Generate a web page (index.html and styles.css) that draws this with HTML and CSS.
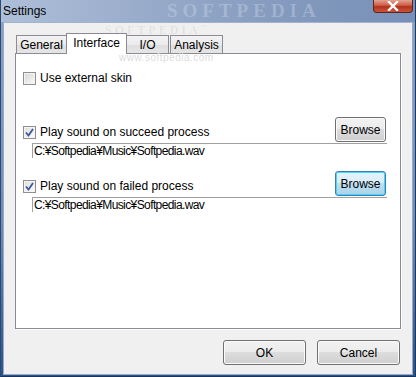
FILE: index.html
```html
<!DOCTYPE html>
<html lang="en">
<head>
    <meta charset="UTF-8">
    <title>Settings</title>
    <link rel="stylesheet" href="styles.css">
</head>
<body>
    <div class="window">
        <div class="titlebar">
            <span class="title">Settings</span>
            <div class="close-btn">
                <svg width="14" height="10" viewBox="0 0 14 10">
                    <path d="M3 1 L11 9 M11 1 L3 9" stroke="#fff" stroke-width="2.4" stroke-linecap="square"/>
                </svg>
            </div>
        </div>

        <div class="client">
            <div class="tabs">
                <div class="tab tab-general">General</div>
                <div class="tab tab-active">Interface</div>
                <div class="tab tab-io">I/O</div>
                <div class="tab tab-analysis">Analysis</div>
            </div>

            <div class="panel">
                <div class="check-row skin-row">
                    <span class="checkbox"></span>
                    <span class="label">Use external skin</span>
                </div>

                <div class="sound-row first-sound">
                    <div class="check-row">
                        <span class="checkbox checked">
                            <svg width="9" height="9" viewBox="0 0 9 9"><path d="M1 4.5 L3.5 7.5 L8 1" fill="none" stroke="#3b5a9a" stroke-width="1.8"/></svg>
                        </span>
                        <span class="label">Play sound on succeed process</span>
                    </div>
                    <button class="btn browse">Browse</button>
                </div>
                <div class="path">C:¥Softpedia¥Music¥Softpedia.wav</div>

                <div class="sound-row second-sound">
                    <div class="check-row">
                        <span class="checkbox checked">
                            <svg width="9" height="9" viewBox="0 0 9 9"><path d="M1 4.5 L3.5 7.5 L8 1" fill="none" stroke="#3b5a9a" stroke-width="1.8"/></svg>
                        </span>
                        <span class="label">Play sound on failed process</span>
                    </div>
                    <button class="btn browse focused">Browse</button>
                </div>
                <div class="path">C:¥Softpedia¥Music¥Softpedia.wav</div>
            </div>

            <div class="footer">
                <button class="btn dialog-btn">OK</button>
                <button class="btn dialog-btn">Cancel</button>
            </div>
        </div>

        <!-- watermarks -->
        <div class="wm wm-title">SOFTPEDIA</div>
        <div class="wm wm-tabs">SOFTPEDIA<sup>™</sup></div>
        <div class="wm wm-url">www.softpedia.com</div>
    </div>
</body>
</html>
```

FILE: styles.css
```css
body {
    margin: 0;
    font-family: "Liberation Sans", Arial, sans-serif;
    font-size: 12px;
    color: #000;
    background: #fff;
}

.window {
    position: relative;
    width: 416px;
    height: 377px;
    box-sizing: border-box;
    display: flex;
    flex-direction: column;
    background: linear-gradient(to bottom, #8ea3c5 0%, #6f8bb6 60%, #2c5286 100%);
    border-left: 1px solid #2a4a78;
    border-right: 1px solid #1d3a66;
    border-bottom: 1px solid #183560;
    overflow: hidden;
}

.titlebar {
    height: 22px;
    flex-shrink: 0;
    display: flex;
    align-items: flex-start;
    justify-content: space-between;
    background: linear-gradient(to right, #aebfd8 0%, #98abca 35%, #8399bd 70%, #7890b8 100%);
}

.title {
    padding: 4px 0 0 2px;
    font-size: 12px;
    color: #000;
}

.close-btn {
    width: 40px;
    height: 13px;
    margin-right: 2px;
    display: flex;
    align-items: center;
    justify-content: center;
    box-sizing: border-box;
    border: 1px solid #5b2520;
    border-top: none;
    border-radius: 0 0 4px 4px;
    background: linear-gradient(to bottom, #e0a393 0%, #cf5a43 45%, #b3321c 55%, #c9553a 100%);
}

.client {
    flex: 1;
    margin: 0 2px 3px 2px;
    padding: 10px 11px 9px 11px;
    display: flex;
    flex-direction: column;
    background: #f0f0f0;
    border: 1px solid #98a9c4;
    border-top-color: #a3b3cc;
}

/* tabs */
.tabs {
    display: flex;
    align-items: flex-end;
    height: 21px;
    margin-bottom: -1px;
    padding-left: 1px;
    position: relative;
    z-index: 1;
}

.tab {
    box-sizing: border-box;
    height: 18px;
    padding-top: 2px;
    text-align: center;
    border: 1px solid #898c95;
    border-bottom: none;
    background: linear-gradient(to bottom, #f3f3f3 0%, #ebebeb 50%, #dedede 51%, #e5e5e5 100%);
    margin-bottom: 1px;
}

.tab-general { width: 50px; border-right: none; }
.tab-io { width: 42px; border-left: none; }
.tab-analysis { width: 53px; margin-left: 1px; }

.tab-active {
    width: 61px;
    height: 21px;
    margin-bottom: 0;
    padding-top: 2px;
    background: #fff;
    border-bottom: none;
}

.panel {
    height: 276px;
    box-sizing: border-box;
    padding: 0 13px 0 7px;
    display: flex;
    flex-direction: column;
    background: #fff;
    border: 1px solid #898c95;
    box-shadow: 1px 1px 0 #fff;
}

.check-row {
    display: flex;
    align-items: center;
    gap: 3px;
    height: 13px;
}

.skin-row {
    margin-top: 18px;
}

.checkbox {
    width: 13px;
    height: 13px;
    box-sizing: border-box;
    flex-shrink: 0;
    display: flex;
    align-items: center;
    justify-content: center;
    border: 1px solid #8f8f8f;
    background: linear-gradient(135deg, #d6d6d6 0%, #ececec 60%, #fafafa 100%);
    box-shadow: inset 0 0 0 1px #f4f4f4;
}

.checkbox.checked {
    background: linear-gradient(135deg, #dcdcdc 0%, #f0f0f0 60%, #fcfcfc 100%);
}

.label {
    line-height: 13px;
    padding-left: 1px;
}

.sound-row {
    display: flex;
    align-items: flex-end;
    justify-content: space-between;
    height: 25px;
}

.sound-row .check-row {
    margin-bottom: 3px;
}

.first-sound { margin-top: 32px; }
.second-sound { margin-top: 13px; }

.path {
    margin: 1px 0 0 9px;
    height: 15px;
    box-sizing: border-box;
    padding: 1px 0 0 1px;
    border-top: 1px solid #a0a0a0;
    border-left: 1px solid #a0a0a0;
    line-height: 13px;
    letter-spacing: -0.6px;
    white-space: nowrap;
}

/* buttons */
.btn {
    font-family: "Liberation Sans", Arial, sans-serif;
    font-size: 12px;
    color: #000;
    box-sizing: border-box;
    padding: 0;
    border: 1px solid #707070;
    border-radius: 3px;
    background: linear-gradient(to bottom, #f2f2f2 0%, #ebebeb 49%, #dddddd 50%, #cfcfcf 100%);
    box-shadow: inset 0 0 0 1px #fbfbfb;
}

.browse {
    width: 51px;
    height: 25px;
    margin-right: 1px;
}

.browse.focused {
    border-color: #3c7fb1;
    background: linear-gradient(to bottom, #e6f3fb 0%, #d9edf9 49%, #bfdfef 50%, #a9d3ea 100%);
    box-shadow: inset 0 0 0 1px #44d6ff;
}

.footer {
    display: flex;
    justify-content: flex-end;
    gap: 11px;
    margin-top: 11px;
    padding-right: 1px;
}

.dialog-btn {
    width: 83px;
    height: 25px;
}

/* watermarks */
.wm {
    position: absolute;
    pointer-events: none;
    white-space: nowrap;
}

.wm-title {
    left: 166px;
    top: 0;
    line-height: 22px;
    font-family: "Liberation Serif", serif;
    font-weight: bold;
    font-size: 19px;
    letter-spacing: 5px;
    color: rgba(215, 225, 240, 0.35);
}

.wm-tabs {
    left: 104px;
    top: 22px;
    line-height: 10px;
    font-family: "Liberation Serif", serif;
    font-weight: bold;
    font-size: 12px;
    letter-spacing: 3px;
    color: rgba(0, 0, 0, 0.07);
}

.wm-tabs sup {
    font-size: 6px;
}

.wm-url {
    left: 118px;
    top: 52px;
    line-height: 11px;
    font-size: 10px;
    letter-spacing: 0.5px;
    color: #dcdcdc;
}
```
